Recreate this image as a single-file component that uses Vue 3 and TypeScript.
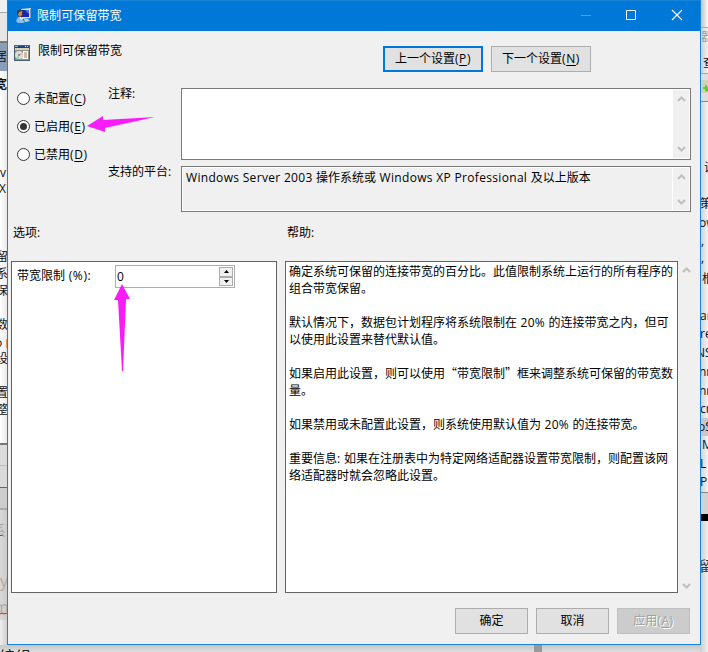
<script setup lang="ts">
import { ref } from 'vue'

interface Fragment {
  text: string
  x: number
  y: number
  color?: string
  bold?: boolean
  size?: number
}

const states = [
  { id: 'none', label: '未配置', key: 'C' },
  { id: 'on', label: '已启用', key: 'E' },
  { id: 'off', label: '已禁用', key: 'D' },
]
const selected = ref('on')
const limit = ref('0')
const platform = 'Windows Server 2003 操作系统或 Windows XP Professional 及以上版本'

const helpLines: string[] = [
  '确定系统可保留的连接带宽的百分比。此值限制系统上运行的所有程序的',
  '组合带宽保留。',
  '',
  '默认情况下，数据包计划程序将系统限制在 20% 的连接带宽之内，但可',
  '以使用此设置来替代默认值。',
  '',
  '如果启用此设置，则可以使用“带宽限制”框来调整系统可保留的带宽数',
  '量。',
  '',
  '如果禁用或未配置此设置，则系统使用默认值为 20% 的连接带宽。',
  '',
  '重要信息: 如果在注册表中为特定网络适配器设置带宽限制，则配置该网',
  '络适配器时就会忽略此设置。',
]

// Latin runs are spaced a little wider; quotation marks take the full-width CJK form.
function split(line: string): string[] {
  return line.split(/([“”]|[ -~]+)/).filter((s) => s.length > 0)
}
function kind(part: string): string {
  if (/^[“”]$/.test(part)) return 'quote'
  return /^[ -~]+$/.test(part) ? 'latin' : ''
}

// Text of the windows lying behind the dialog, visible only at its edges.
const behind: Fragment[] = [
  { text: '居', x: -5, y: 57 },
  { text: '宽', x: -5, y: 85, bold: true },
  { text: 'v', x: 0, y: 173 },
  { text: 'X', x: -1, y: 189 },
  { text: '留', x: -4, y: 257 },
  { text: '系', x: -4, y: 274 },
  { text: '保', x: -4, y: 291 },
  { text: '数', x: -4, y: 325 },
  { text: 'o', x: -5, y: 343 },
  { text: '设', x: -4, y: 359 },
  { text: '置', x: -4, y: 393 },
  { text: '整', x: -4, y: 410 },
  { text: '系', x: -9, y: 530, color: '#a9a9a9', size: 15 },
  { text: 'y', x: 0, y: 581, color: '#b5a99f', size: 16 },
  { text: 'm', x: -6, y: 607, color: '#aaa', size: 16 },
  { text: '编组', x: -1, y: 657, color: '#222', size: 16 },
  { text: '器', x: 701, y: 37, color: '#999' },
  { text: '查', x: 703, y: 63 },
  { text: '说', x: 704, y: 168 },
  { text: '策', x: 700, y: 204 },
  { text: 'ow', x: 699, y: 223 },
  { text: ',', x: 701, y: 241 },
  { text: ',', x: 701, y: 258 },
  { text: '根', x: 702, y: 279 },
  { text: 'an', x: 700, y: 316 },
  { text: 're', x: 700, y: 334 },
  { text: 'NS', x: 696, y: 353 },
  { text: 'nn', x: 699, y: 372 },
  { text: 'nn', x: 699, y: 391 },
  { text: 'cr', x: 700, y: 409 },
  { text: 'oS', x: 698, y: 427 },
  { text: 'M', x: 702, y: 445 },
  { text: 'L', x: 700, y: 464 },
  { text: 'PP', x: 700, y: 482 },
  { text: '留', x: 699, y: 566, color: '#333', size: 14 },
]
</script>

<template>
  <div class="desktop">
    <div class="backdrop">
      <div class="strip left">
        <i class="l-top"></i><i class="l-tool"></i><i class="l-head"></i><i class="l-list"></i>
        <i class="l-foot"></i><i class="l-foot2"></i><i class="l-shade"></i><i class="l-grey"></i><i class="l-end"></i>
      </div>
      <div class="strip bottom"><i></i></div>
      <div class="strip right">
        <i class="r-top"></i><i class="r-menu"></i><i class="r-tool"></i><i class="r-list"></i>
        <i class="r-sel"></i><i class="r-list2"></i><i class="r-grey"></i><i class="r-black"></i><i class="r-page"></i>
      </div>
      <svg class="marks" width="708" height="652" viewBox="0 0 708 652">
        <path d="M6.500 339v9" stroke="#e59a3d" />
        <path d="M0 535l1 1 1-1 1 1M0 614l2-1 2 1 3-1" fill="none" stroke="#dc1e1e" />
        <path d="M701 80h7v13h-7z" fill="#cfd4b7" />
        <path d="M703 87h2v-3l3 3v5l-3-1v-2h-2z" fill="#62c832" />
      </svg>
      <span
        v-for="(f, i) in behind"
        :key="i"
        class="fragment"
        :style="{ left: f.x + 'px', top: f.y - 8 + 'px', color: f.color ?? '#111', fontWeight: f.bold ? 700 : 400, fontSize: (f.size ?? 12) + 'px' }"
      >{{ f.text }}</span>
    </div>

    <main class="dialog">
      <header class="titlebar">
        <svg class="app-icon" width="16" height="16" viewBox="0 0 16 16">
          <path d="M5 1l10-1v10l-9 1z" fill="#d8dee2" />
          <path d="M6 2h7v7H6z" fill="#1726bb" />
          <path d="M9 2h4v4z" fill="#5378f0" />
          <path d="M14 1h1v9h-1z" fill="#8999a5" />
          <path d="M8 11h4l2 2-5 1z" fill="#c3cdd3" />
          <path d="M1 3l3-2 3 2v5l-3 2-3-3z" fill="#49382e" />
          <path d="M3 4l3-1v4l-2 2-2-2z" fill="#b58a6d" />
          <path d="M0 13l2-4 3 1 4 4-2 1H2z" fill="#8dbce5" />
          <path d="M3 9l2 3 2-1-2-2z" fill="#dceaf5" />
        </svg>
        <span class="caption">限制可保留带宽</span>
        <div class="window-buttons">
          <svg width="46" height="30" viewBox="0 0 46 30"><path d="M19 14.500h10" stroke="#4d9fe1" /></svg>
          <svg width="46" height="30" viewBox="0 0 46 30"><path d="M18.500 9.500h9v9h-9z" fill="none" stroke="#fff" /></svg>
          <svg width="46" height="30" viewBox="0 0 46 30"><path d="M18 9l10 10M28 9l-10 10" stroke="#fff" stroke-width="1.150" /></svg>
        </div>
      </header>

      <section class="heading">
        <svg class="policy-icon" width="16" height="16" viewBox="0 0 16 16">
          <path d="M0 0h16v16H0z" fill="#4b6172" />
          <path d="M1 1h14v2H1z" fill="#263b82" />
          <path d="M1 1h3v1H1z" fill="#72c7ce" />
          <path d="M11 1h1v1h-1zM13 1h1v1h-1z" fill="#e7edf0" />
          <path d="M1 3h14v2H1z" fill="#d8d2ba" />
          <path d="M1 5h14v10H1z" fill="#8f8f8c" />
          <circle cx="5" cy="10" r="4" fill="#ddd" />
          <path d="M5 10l3-3 1 3z" fill="#e5b4d0" />
          <path d="M5 10l-3 3 3 1z" fill="#93d7aa" />
          <circle cx="5" cy="10" r="1" fill="#777" />
          <path d="M9 6h5v8H8l1-3z" fill="#fffbe2" />
          <path d="M10 8h3M10 10h3M10 12h3" stroke="#8e8262" />
        </svg>
        <span class="policy-name">限制可保留带宽</span>
        <div class="nav-buttons">
          <button class="btn nav default">上一个设置<span class="key">(<u>P</u>)</span></button>
          <button class="btn nav">下一个设置<span class="key">(<u>N</u>)</span></button>
        </div>
      </section>

      <section class="state">
        <div class="radios">
          <label v-for="s in states" :key="s.id" class="radio">
            <input v-model="selected" type="radio" name="state" :value="s.id" />
            <span>{{ s.label }}<span class="key">(<u>{{ s.key }}</u>)</span></span>
          </label>
        </div>
        <div class="fields">
          <span class="field-label">注释:</span>
          <div class="box comment">
            <div class="box-text"></div>
            <div class="scroll">
              <svg width="9" height="7" viewBox="0 0 9 7"><path d="M1 5l3.500-3.500L8 5" /></svg>
              <svg width="9" height="7" viewBox="0 0 9 7"><path d="M1 2l3.500 3.500L8 2" /></svg>
            </div>
          </div>
          <span class="field-label">支持的平台:</span>
          <div class="box platform">
            <div class="box-text">
              <span v-for="(part, j) in split(platform)" :key="j" :class="kind(part)">{{ part }}</span>
            </div>
            <div class="scroll">
              <svg width="9" height="7" viewBox="0 0 9 7"><path d="M1 5l3.500-3.500L8 5" /></svg>
              <svg width="9" height="7" viewBox="0 0 9 7"><path d="M1 2l3.500 3.500L8 2" /></svg>
            </div>
          </div>
        </div>
      </section>

      <section class="panes">
        <span class="pane-title">选项:</span>
        <span class="pane-title">帮助:</span>
        <div class="pane options">
          <span class="limit-label">带宽限制<span class="key"> (%):</span></span>
          <div class="spinner">
            <input v-model="limit" type="text" />
            <div class="steps">
              <i><svg width="5" height="3" viewBox="0 0 5 3"><path d="M0 3L2.500 0 5 3z" /></svg></i>
              <i><svg width="5" height="3" viewBox="0 0 5 3"><path d="M0 0h5L2.500 3z" /></svg></i>
            </div>
          </div>
        </div>
        <div class="help">
          <div class="pane help-text">
            <p v-for="(line, i) in helpLines" :key="i">
              <span v-for="(part, j) in split(line)" :key="j" :class="kind(part)">{{ part }}</span>
            </p>
          </div>
          <div class="scroll outer">
            <svg width="9" height="7" viewBox="0 0 9 7"><path d="M1 5l3.500-3.500L8 5" /></svg>
            <svg width="9" height="7" viewBox="0 0 9 7"><path d="M1 2l3.500 3.500L8 2" /></svg>
          </div>
        </div>
      </section>

      <footer class="actions">
        <button class="btn">确定</button>
        <button class="btn">取消</button>
        <button class="btn" disabled>应用<span class="key">(<u>A</u>)</span></button>
      </footer>
    </main>

    <svg class="arrows" width="708" height="652" viewBox="0 0 708 652" fill="#f81cf8">
      <path d="M87 126l16-10v4l52-3-50 11v4z" />
      <path d="M122 284l8 15h-4l-3 72h-1l-4-71h-4z" />
    </svg>
  </div>
</template>

<style>
html,
body {
  overflow: hidden;
}
</style>

<style scoped>
* {
  box-sizing: border-box;
}
.desktop {
  position: relative;
  width: 708px;
  height: 652px;
  overflow: hidden;
  font: 12px/17px 'Open Sans', 'Noto Sans CJK SC', sans-serif;
  color: #000;
  white-space: nowrap;
}
.backdrop,
.marks,
.arrows {
  position: absolute;
  inset: 0;
}
.arrows {
  pointer-events: none;
}
.fragment {
  position: absolute;
  line-height: 16px;
}
.strip {
  position: absolute;
  display: flex;
  flex-direction: column;
}
.left {
  left: 0;
  top: 0;
  width: 8px;
  height: 652px;
}
.right {
  right: 0;
  top: 0;
  width: 8px;
  height: 652px;
}
.bottom {
  left: 0;
  top: 645px;
  width: 708px;
  height: 7px;
  background: linear-gradient(#c5c5c5, #dedede);
}
.bottom i {
  width: 8px;
  height: 7px;
  margin-left: 534px;
  background: #999;
}
.l-top { height: 13px; background: #f1f1f1; border-bottom: 1px solid #aaa; }
.l-tool { height: 30px; background: #e6e6e6; border-bottom: 2px solid #777; }
.l-head { height: 28px; background: #899eb9; }
.l-list { height: 374px; background: linear-gradient(90deg, #fff, #e7e7e7); border-bottom: 2px solid #777; }
.l-foot { height: 21px; background: #dcdcdc; border-bottom: 1px solid #bbb; }
.l-foot2 { height: 22px; background: #dadada; border-bottom: 1px solid #666; }
.l-shade { height: 22px; background: #ccc; border-bottom: 2px solid #aaa; }
.l-grey { height: 110px; background: linear-gradient(90deg, #d8d8d8, #c9c9c9); }
.l-end { flex: 1; background: linear-gradient(90deg, #eee, #ccc); }
.r-top { height: 28px; background: linear-gradient(90deg, #bbb, #fafafa); border-bottom: 1px solid #aaa; }
.r-menu { height: 46px; background: linear-gradient(90deg, #ccc, #f1f1f1); border-bottom: 1px solid #aaa; }
.r-tool { height: 28px; background: #dedede; border-bottom: 1px solid #888; }
.r-list { height: 316px; background: linear-gradient(90deg, #d0d0d0, #f3f3f3); }
.r-sel { height: 18px; background: #c8c8c8; }
.r-list2 { height: 57px; background: linear-gradient(90deg, #d0d0d0, #f3f3f3); border-bottom: 1px solid #888; }
.r-grey { height: 21px; background: #d2d2d2; }
.r-black { height: 7px; background: #000; }
.r-page { flex: 1; background: linear-gradient(90deg, #ccc, #efefef); }

.dialog {
  position: absolute;
  left: 7px;
  top: 0;
  width: 694px;
  height: 645px;
  display: flex;
  flex-direction: column;
  background: #f0f0f0;
  border: 1px solid #1883d7;
  border-top: 0;
}
.titlebar {
  display: flex;
  align-items: center;
  height: 31px;
  padding-left: 8px;
  background: #0078d7;
  border-top: 1px solid #1883d7;
  color: #fff;
}
.app-icon {
  margin-top: -1px;
}
.caption {
  margin: -1px 0 0 5px;
  letter-spacing: 0.1px;
}
.window-buttons {
  display: flex;
  margin-left: auto;
}
.window-buttons svg {
  display: block;
}
.heading {
  display: flex;
  align-items: flex-start;
  height: 57px;
  padding: 15px 109px 0 6px;
}
.policy-icon {
  margin-top: -1px;
}
.policy-name {
  margin: -4px 0 0 8px;
}
.nav-buttons {
  display: flex;
  gap: 8px;
  margin-left: auto;
}
.btn {
  width: 73px;
  height: 26px;
  padding: 0 0 1px;
  font: inherit;
  color: #000;
  background: #e1e1e1;
  border: 1px solid #adadad;
  border-radius: 0;
}
.nav {
  width: 100px;
}
.default {
  border: 2px solid #0078d7;
}
.btn:disabled {
  color: #a0a0a0;
  text-shadow: 1px 1px #fff;
  background: #ccc;
  border-color: #bfbfbf;
}
.latin {
  letter-spacing: 0.32px;
  white-space: pre;
}
.key {
  letter-spacing: 0.6px;
}
u {
  text-decoration: underline;
  text-underline-offset: 2px;
  text-decoration-thickness: 1px;
}
.state {
  display: flex;
  height: 124px;
  padding: 0 9px;
}
.radios {
  display: flex;
  flex-direction: column;
  gap: 11px;
  width: 91px;
  padding-top: 2px;
}
.radio {
  display: flex;
  align-items: center;
  gap: 4px;
  height: 17px;
}
.radio input {
  appearance: none;
  display: grid;
  place-items: center;
  width: 13px;
  height: 13px;
  margin: 0;
  border: 1px solid #333;
  border-radius: 50%;
  background: #fff;
}
.radio input:checked::before {
  content: '';
  width: 7px;
  height: 7px;
  border-radius: 50%;
  background: #333;
}
.fields {
  display: grid;
  grid-template-columns: 73px 510px;
  grid-template-rows: 72px 46px;
  row-gap: 6px;
}
.field-label {
  margin-top: -3px;
}
.box {
  display: flex;
  border: 1px solid #7a7a7a;
  background: #fff;
  padding: 1px;
}
.box-text {
  flex: 1;
  padding: 1px 3px;
}
.platform .box-text {
  background: #f0f0f0;
}
.scroll {
  display: flex;
  flex-direction: column;
  align-items: center;
  justify-content: space-between;
  width: 16px;
  padding: 6px 0;
  background: #f0f0f0;
}
.scroll path {
  fill: none;
  stroke: #bfbfbf;
  stroke-width: 2;
}
.platform .scroll {
  padding: 6px 0 5px;
  margin-left: 1px;
}
.panes {
  display: grid;
  grid-template-columns: 266px 1fr;
  grid-template-rows: 49px 332px;
  column-gap: 8px;
  padding: 0 5px 0 3px;
}
.pane-title {
  padding: 12px 0 0 2px;
}
.pane {
  border: 1px solid #646464;
  background: #fff;
}
.options {
  display: flex;
  align-items: flex-start;
  padding: 3px 0 0 5px;
}
.limit-label {
  width: 98px;
  padding-top: 2px;
}
.spinner {
  display: flex;
  width: 120px;
  height: 23px;
  padding: 1px 0 1px 1px;
  border: 1px solid #adadad;
}
.spinner input {
  flex: 1;
  min-width: 0;
  padding: 0 0 1px;
  border: 0;
  outline: 0;
  font: inherit;
  background: #fff;
}
.steps {
  display: flex;
  flex-direction: column;
  width: 15px;
}
.steps i {
  display: grid;
  place-items: center;
  flex: 1;
  width: 14px;
  border: 1px solid #adadad;
  background: #f0f0f0;
}
.steps svg {
  display: block;
}
.help {
  display: flex;
}
.help-text {
  width: 393px;
  padding: 1px 0 0 3px;
}
.help-text p {
  height: 17px;
  margin: 0;
}
.quote {
  font-family: 'Noto Sans CJK SC', sans-serif;
  line-height: 12px;
}
.outer {
  width: 17px;
  padding: 6px 0 4px;
}
.actions {
  display: flex;
  justify-content: flex-end;
  gap: 8px;
  padding: 15px 10px 0 0;
}
</style>
